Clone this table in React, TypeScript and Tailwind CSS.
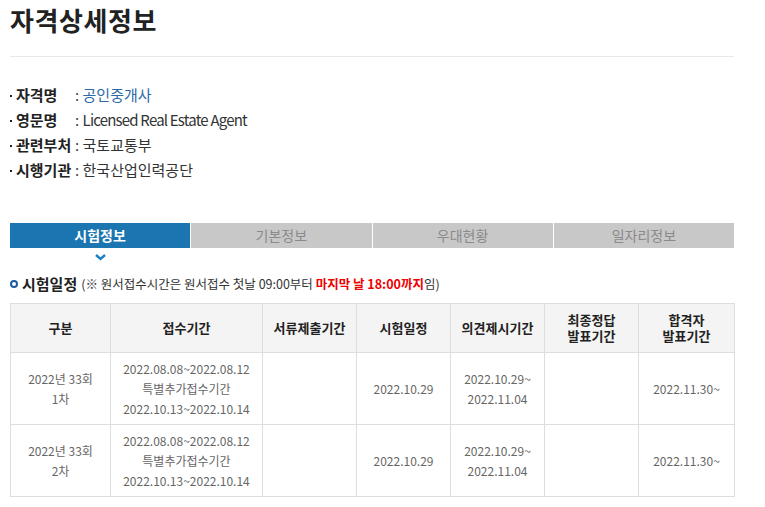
import React from 'react'

const font = { fontFamily: '"Noto Sans CJK KR", "Noto Sans", sans-serif' }

const infoRows = [
  { label: '자격명', value: '공인중개사', blue: true },
  { label: '영문명', value: 'Licensed Real Estate Agent', latin: true },
  { label: '관련부처', value: '국토교통부' },
  { label: '시행기관', value: '한국산업인력공단' },
]

const tabs = ['시험정보', '기본정보', '우대현황', '일자리정보']

const headers = [
  ['구분'],
  ['접수기간'],
  ['서류제출기간'],
  ['시험일정'],
  ['의견제시기간'],
  ['최종정답', '발표기간'],
  ['합격자', '발표기간'],
]

const widths = ['w-[100px]', 'w-[152px]', 'w-[94px]', 'w-[94px]', 'w-[94px]', 'w-[94px]', 'w-[96px]']

const rows = [
  {
    round: ['2022년 33회', '1차'],
    apply: ['2022.08.08~2022.08.12', '특별추가접수기간', '2022.10.13~2022.10.14'],
    exam: '2022.10.29',
    opinion: ['2022.10.29~', '2022.11.04'],
    pass: '2022.11.30~',
  },
  {
    round: ['2022년 33회', '2차'],
    apply: ['2022.08.08~2022.08.12', '특별추가접수기간', '2022.10.13~2022.10.14'],
    exam: '2022.10.29',
    opinion: ['2022.10.29~', '2022.11.04'],
    pass: '2022.11.30~',
  },
]

function Lines({ lines }: { lines: string[] }) {
  return (
    <>
      {lines.map((l, i) => (
        <div key={i}>{l}</div>
      ))}
    </>
  )
}

export default function App() {
  return (
    <div className="bg-white w-[765px] h-[507px] overflow-hidden text-[#333]" style={font}>
      <div className="w-[724px] ml-[10px]">
        <h1 className="pt-[3px] text-[26px] leading-[34px] font-bold text-[#222] tracking-[0.6px]">
          자격상세정보
        </h1>
        <div className="mt-[19px] h-px bg-[#e8e8e8]" />

        <ul className="mt-[25px] text-[15px] leading-[25px]">
          {infoRows.map((r) => (
            <li key={r.label} className="flex items-center">
              <span className="w-[2px] h-[2px] bg-[#222] mr-[4px] mt-[2px]" />
              <span className="w-[59px] font-bold text-[#222]">{r.label}</span>
              <span className="text-[#444]">:&nbsp;</span>
              <span
                className={
                  (r.blue ? 'text-[#2f6aa8]' : 'text-[#333]') + (r.latin ? ' tracking-[-0.8px]' : '')
                }
              >
                {r.value}
              </span>
            </li>
          ))}
        </ul>

        <div className="mt-[41px] flex gap-px">
          {tabs.map((t, i) => (
            <div
              key={t}
              className={
                i === 0
                  ? 'flex-1 h-[25px] flex items-center justify-center bg-[#1a75b0] text-white font-bold text-[14px]'
                  : 'flex-1 h-[25px] flex items-center justify-center bg-[#c8c8c8] text-[#8a8a8a] text-[14px]'
              }
            >
              {t}
            </div>
          ))}
        </div>
        <div className="flex w-[181px] justify-center pt-[6px]">
          <svg width="11" height="7" viewBox="0 0 11 7">
            <path d="M1 1 L5.5 5 L10 1" stroke="#1a80c8" strokeWidth="2.4" fill="none" />
          </svg>
        </div>

        <div className="mt-[13px] flex items-center">
          <span className="w-[8px] h-[8px] rounded-full border-[2px] border-[#1b5d9a] mr-[4px]" />
          <span className="text-[15px] font-bold text-[#222] leading-[20px]">시험일정</span>
          <span className="ml-[4px] text-[12.5px] text-[#333] leading-[20px]">
            (※ 원서접수시간은 원서접수 첫날 09:00부터{' '}
            <span className="text-[#ee0000] font-bold">마지막 날 18:00까지</span>임)
          </span>
        </div>

        <table className="mt-[9px] border-collapse table-fixed w-[724px] text-center">
          <thead>
            <tr className="h-[49px] bg-[#f4f4f4]">
              {headers.map((h, i) => (
                <th
                  key={i}
                  className={`${widths[i]} border border-[#dedede] text-[13px] leading-[16.5px] font-bold text-[#222]`}
                >
                  <Lines lines={h} />
                </th>
              ))}
            </tr>
          </thead>
          <tbody className="text-[12px] leading-[20px] text-[#666]">
            {rows.map((r, i) => (
              <tr key={i} className="h-[72px]">
                <td className="border border-[#dedede]">
                  <Lines lines={r.round} />
                </td>
                <td className="border border-[#dedede]">
                  <Lines lines={r.apply} />
                </td>
                <td className="border border-[#dedede]" />
                <td className="border border-[#dedede]">{r.exam}</td>
                <td className="border border-[#dedede]">
                  <Lines lines={r.opinion} />
                </td>
                <td className="border border-[#dedede]" />
                <td className="border border-[#dedede]">{r.pass}</td>
              </tr>
            ))}
          </tbody>
        </table>
      </div>
    </div>
  )
}
